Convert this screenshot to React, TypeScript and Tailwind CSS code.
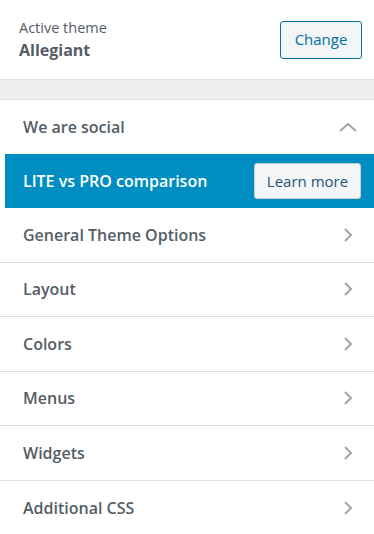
import React from 'react';

const sections = ['General Theme Options', 'Layout', 'Colors', 'Menus', 'Widgets', 'Additional CSS'];

function ChevronRight() {
  return (
    <svg width="10" height="16" viewBox="0 0 10 16" fill="none">
      <path d="M2 2l6 6-6 6" stroke="#a0a5aa" strokeWidth="2" />
    </svg>
  );
}

function ChevronUp() {
  return (
    <svg width="18" height="10" viewBox="0 0 18 10" fill="none">
      <path d="M1 9l8-7 8 7" stroke="#a0a5aa" strokeWidth="2" />
    </svg>
  );
}

export default function App() {
  return (
    <div
      className="w-[374px] h-[534px] overflow-hidden bg-white text-[#555d66]"
      style={{ fontFamily: '"Open Sans", "Noto Sans", sans-serif' }}
    >
      {/* Active theme */}
      <div className="h-[80px] flex items-center justify-between pl-[19px] pr-[12px] border-b border-[#ddd]">
        <div className="flex flex-col pt-[1px]">
          <span className="text-[14.5px] leading-[20px]">Active theme</span>
          <span className="text-[16px] leading-[24px] font-bold">Allegiant</span>
        </div>
        <button className="w-[82px] h-[38px] rounded-[3px] border border-[#0071a1] bg-[#f3f5f6] text-[#0071a1] text-[15px]">
          Change
        </button>
      </div>

      <div className="h-[20px] bg-[#eee] border-b border-[#ddd]" />

      {/* We are social */}
      <div className="h-[54px] flex items-center justify-between pl-[23px] pr-[17px]">
        <span className="text-[16px] font-semibold">We are social</span>
        <ChevronUp />
      </div>

      {/* LITE vs PRO */}
      <div className="ml-[5px] h-[54px] bg-[#008ec2] flex items-center justify-between pl-[18px] pr-[13px]">
        <span className="text-[16px] font-semibold text-white">LITE vs PRO comparison</span>
        <button className="w-[107px] h-[36px] rounded-[3px] border border-[#ccc] bg-[#f3f5f6] text-[#23557a] text-[15px]">
          Learn more
        </button>
      </div>

      {sections.map((s, i) => (
        <div
          key={s}
          className={`h-[54.5px] flex items-center justify-between pl-[23px] pr-[21px] ${i < sections.length - 1 ? 'border-b border-[#ddd]' : ''}`}
        >
          <span className="text-[16px] font-semibold">{s}</span>
          <ChevronRight />
        </div>
      ))}
    </div>
  );
}
